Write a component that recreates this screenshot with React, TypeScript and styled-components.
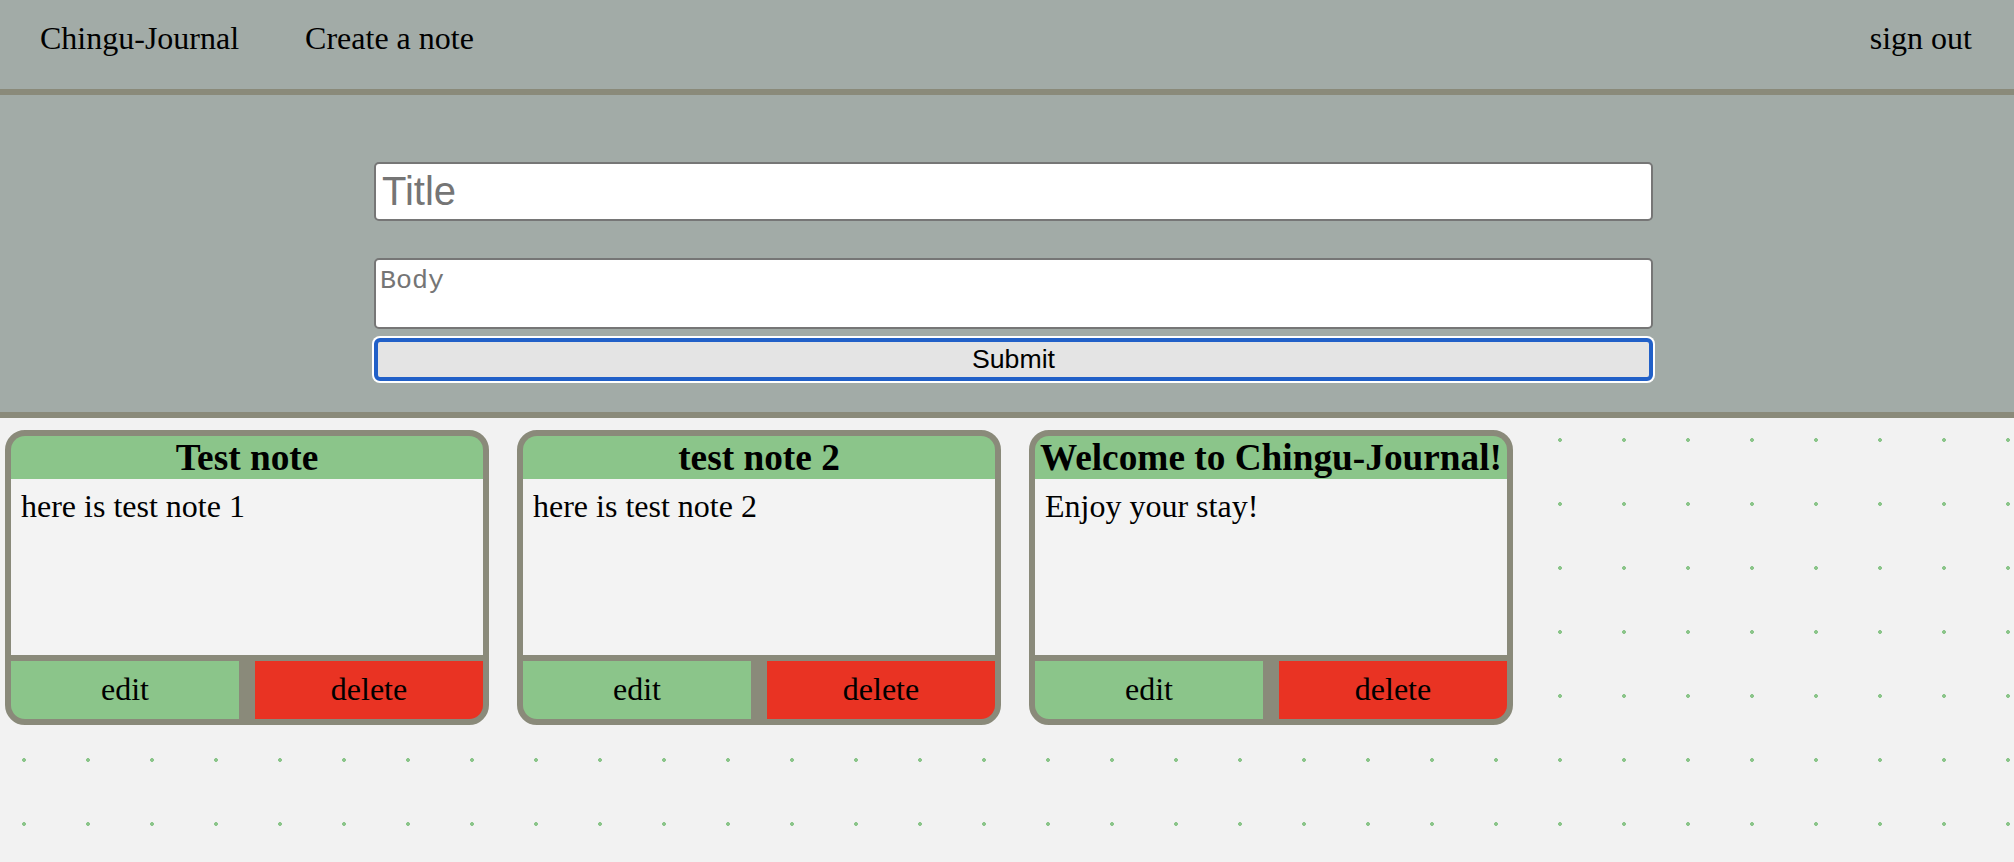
import React from "react";
import styled, { createGlobalStyle } from "styled-components";

const GlobalStyle = createGlobalStyle`
  html, body {
    margin: 0;
    padding: 0;
    background: #f2f2f2;
  }
  * { box-sizing: border-box; }
`;

const Page = styled.div`
  display: flex;
  flex-direction: column;
  min-height: 100vh;
  font-family: "Liberation Serif", "Times New Roman", serif;
  color: #000;
`;

const NavBar = styled.nav`
  display: flex;
  align-items: flex-start;
  height: 95px;
  padding: 20px 42px 0 40px;
  background: #a2aba7;
  border-bottom: 6px solid #8a8a7a;
`;

const NavGroup = styled.div`
  display: flex;
  align-items: center;
  gap: 66px;
`;

const NavLink = styled.a<{ $right?: boolean }>`
  font-size: 32px;
  color: #000;
  text-decoration: none;
  cursor: pointer;
  margin-left: ${(p) => (p.$right ? "auto" : "0")};
`;

const FormSection = styled.section`
  background: #a2aba7;
  padding: 67px 0 31px;
  border-bottom: 6px solid #8a8a7a;
`;

const Form = styled.form`
  display: flex;
  flex-direction: column;
  width: 1279px;
  margin-left: 374px;
`;

const TitleInput = styled.input`
  height: 59px;
  margin: 0 0 37px;
  padding: 0 6px;
  border: 2px solid #767676;
  border-radius: 5px;
  background: #fff;
  font-family: "Liberation Sans", Arial, sans-serif;
  font-size: 40px;
  color: #000;
  outline: none;
  &::placeholder { color: #757575; }
`;

const BodyInput = styled.textarea`
  height: 71px;
  margin: 0 0 9px;
  padding: 6px 4px 4px;
  border: 2px solid #767676;
  border-radius: 5px;
  background: #fff;
  font-family: "Liberation Mono", "Courier New", monospace;
  font-size: 26.67px;
  resize: none;
  outline: none;
  &::placeholder { color: #757575; }
`;

const SubmitButton = styled.button`
  height: 43px;
  border: 4px solid #2160c8;
  border-radius: 6px;
  box-shadow: 0 0 0 2px #ffffff;
  background: #e4e4e4;
  font-family: "Liberation Sans", Arial, sans-serif;
  font-size: 26.67px;
  color: #000;
  padding: 0;
`;

const NotesArea = styled.main`
  flex: 1;
  display: flex;
  align-items: flex-start;
  gap: 28px;
  padding: 12px 0 0 5px;
  background-color: #f2f2f2;
  background-image: radial-gradient(circle, #8bc58a 1.6px, transparent 2.2px);
  background-size: 64px 64px;
  background-position: -8px -10px;
`;

const Card = styled.article`
  display: flex;
  flex-direction: column;
  width: 484px;
  border: 6px solid #8a8a7a;
  border-radius: 20px;
  overflow: hidden;
  background: #8a8a7a;
`;

const CardTitle = styled.h3`
  margin: 0;
  height: 43px;
  line-height: 43px;
  background: #8bc58a;
  text-align: center;
  font-size: 37.3px;
  font-weight: bold;
  white-space: nowrap;
  overflow: hidden;
`;

const CardBody = styled.p`
  margin: 0;
  height: 176px;
  padding: 9px 10px;
  background: #f3f3f3;
  font-size: 32px;
`;

const CardActions = styled.div`
  display: grid;
  grid-template-columns: 1fr 1fr;
  gap: 16px;
  margin-top: 6px;
  height: 58px;
`;

const ActionButton = styled.button<{ $kind: "edit" | "delete" }>`
  border: none;
  padding: 0 0 2px;
  background: ${(p) => (p.$kind === "edit" ? "#8bc58a" : "#e93323")};
  font-family: "Liberation Serif", "Times New Roman", serif;
  font-size: 32px;
  color: #000;
  cursor: pointer;
`;

const notes = [
  { title: "Test note", body: "here is test note 1" },
  { title: "test note 2", body: "here is test note 2" },
  { title: "Welcome to Chingu-Journal!", body: "Enjoy your stay!" },
];

export default function App() {
  return (
    <Page>
      <GlobalStyle />
      <NavBar>
        <NavGroup>
          <NavLink>Chingu-Journal</NavLink>
          <NavLink>Create a note</NavLink>
        </NavGroup>
        <NavLink $right>sign out</NavLink>
      </NavBar>
      <FormSection>
        <Form onSubmit={(e) => e.preventDefault()}>
          <TitleInput placeholder="Title" />
          <BodyInput placeholder="Body" />
          <SubmitButton type="submit">Submit</SubmitButton>
        </Form>
      </FormSection>
      <NotesArea>
        {notes.map((n) => (
          <Card key={n.title}>
            <CardTitle>{n.title}</CardTitle>
            <CardBody>{n.body}</CardBody>
            <CardActions>
              <ActionButton $kind="edit">edit</ActionButton>
              <ActionButton $kind="delete">delete</ActionButton>
            </CardActions>
          </Card>
        ))}
      </NotesArea>
    </Page>
  );
}
